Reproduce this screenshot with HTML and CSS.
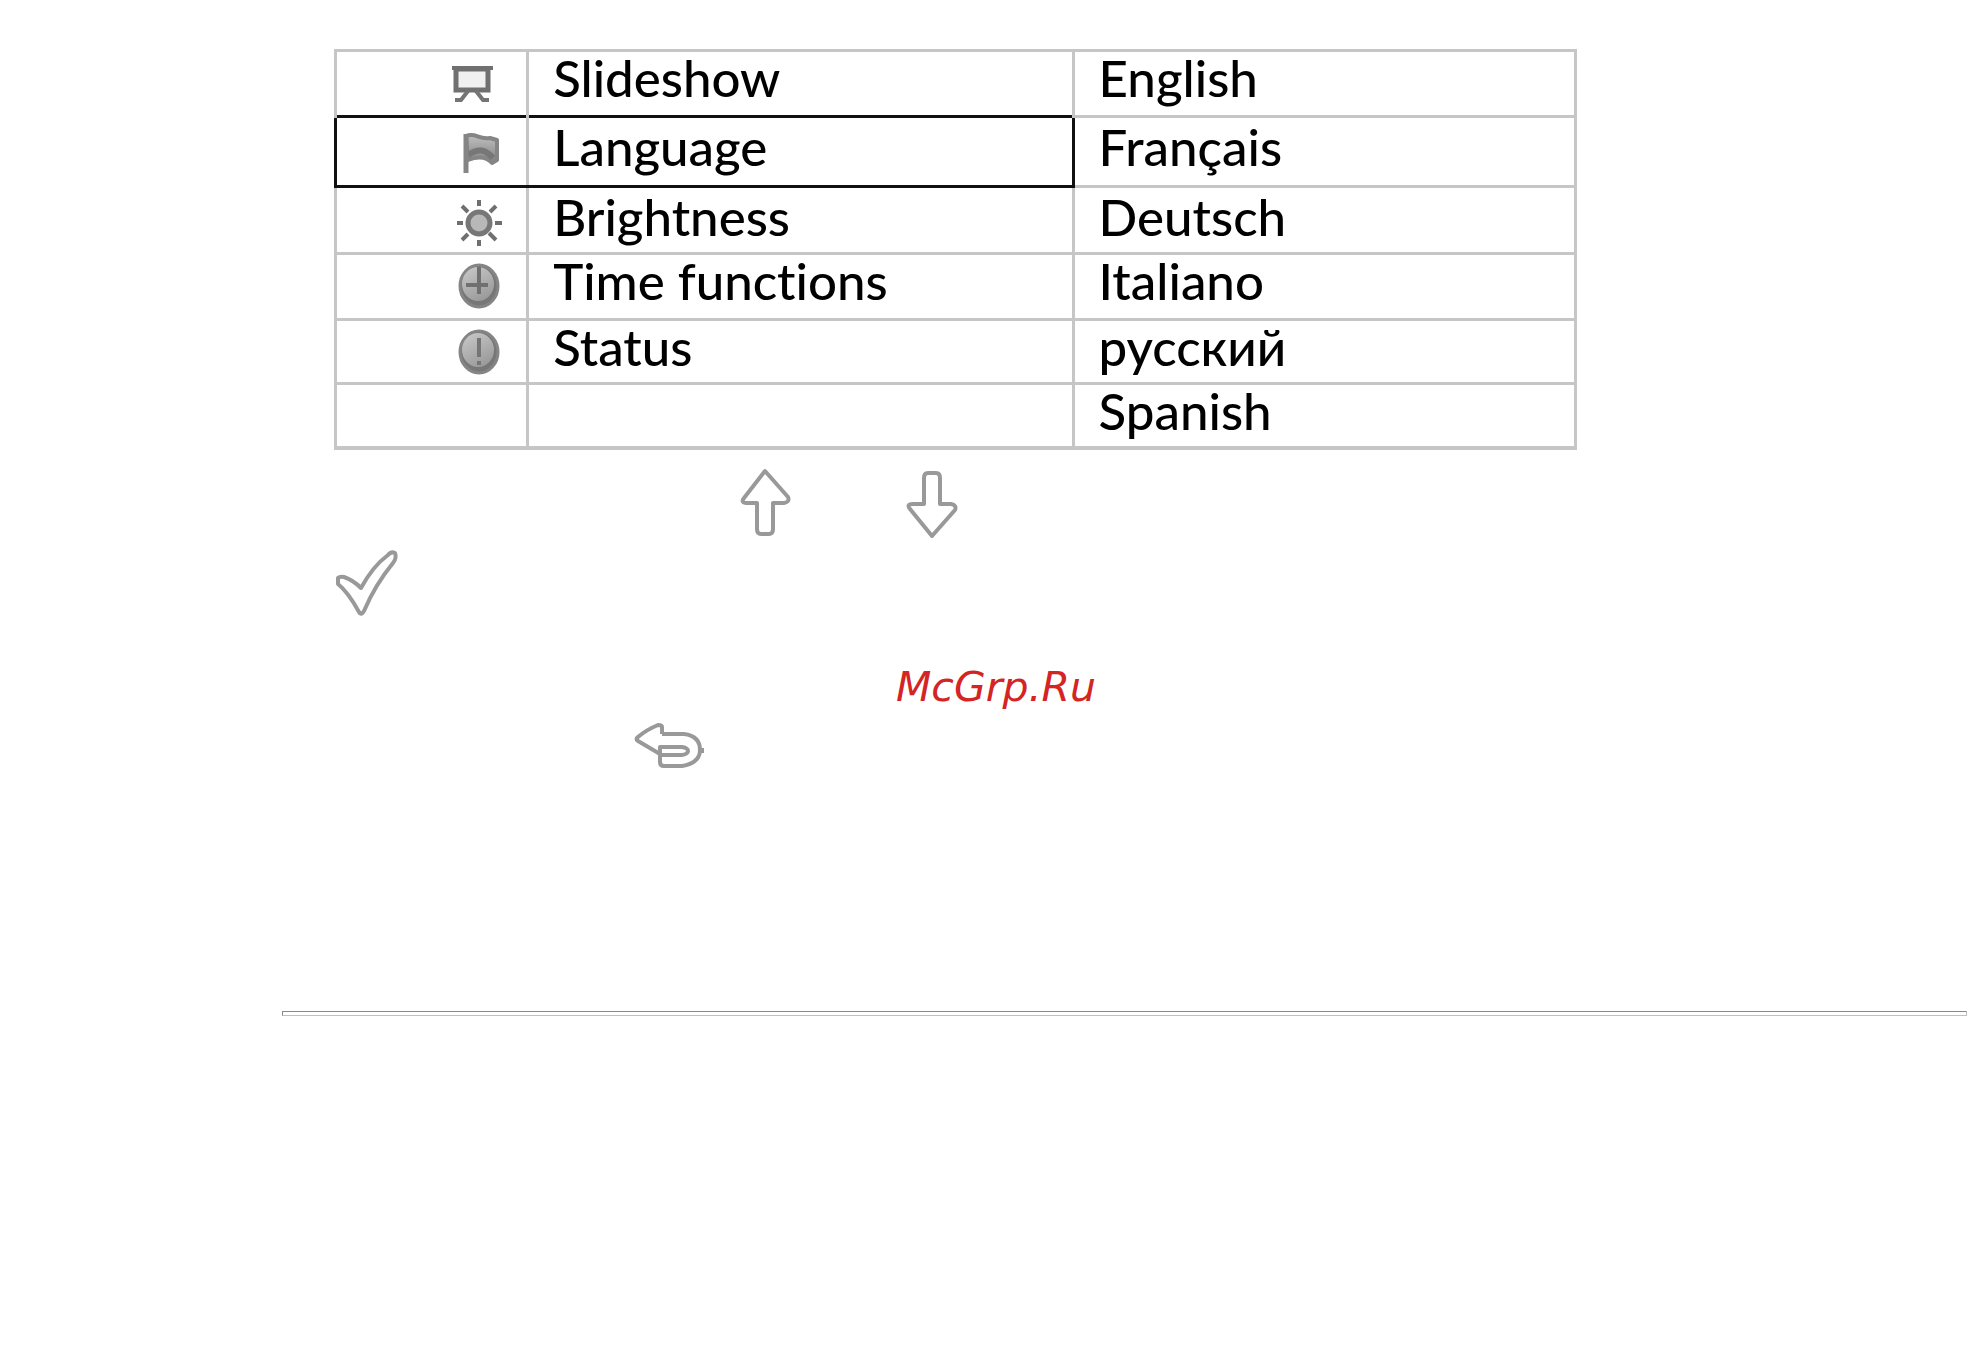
FILE: index.html
```html
<!DOCTYPE html>
<html lang="en">
<head>
  <meta charset="UTF-8" />
  <meta name="viewport" content="width=device-width, initial-scale=1.0"/>
  <title>Menu settings</title>
  <link rel="stylesheet" href="styles.css">
</head>
<body>
  <main class="manual-page">
    <table class="menu-table">
      <colgroup>
        <col class="col-icon">
        <col class="col-name">
        <col class="col-option">
      </colgroup>
      <tbody>
        <tr class="row-first">
          <td class="icon-cell">
            <svg class="menu-icon" viewBox="0 0 48 48" aria-hidden="true">
              <rect x="0" y="9" width="32" height="21" fill="#f0f0f0" stroke="#707070" stroke-width="5"/>
              <path d="M-4 8H37" stroke="#707070" stroke-width="4"/>
              <path d="M12 31L5 40H-1M20 31L27 40H33" fill="none" stroke="#757575" stroke-width="4"/>
            </svg>
          </td>
          <td>Slideshow</td>
          <td>English</td>
        </tr>
        <tr class="row-language selected">
          <td class="icon-cell">
            <svg class="menu-icon" viewBox="0 0 48 48" aria-hidden="true">
              <defs>
                <linearGradient id="flag-fill" x1="0" y1="0" x2="0" y2="1">
                  <stop offset="0" stop-color="#c0c0c0"/>
                  <stop offset="1" stop-color="#808080"/>
                </linearGradient>
              </defs>
              <path d="M10 7C20 3 22 11 34 9L41 11V31L36 34C30 27 20 28 12 31Z" fill="url(#flag-fill)" stroke="#858585" stroke-width="4" stroke-linejoin="round"/>
              <path d="M12 26C22 19 29 20 37 29" fill="none" stroke="#777" stroke-width="6"/>
              <path d="M10 5V44" stroke="#858585" stroke-width="5"/>
            </svg>
          </td>
          <td>Language</td>
          <td>Français</td>
        </tr>
        <tr class="row-brightness">
          <td class="icon-cell">
            <svg class="menu-icon" viewBox="0 0 48 48" aria-hidden="true">
              <path d="M23 1V7M23 41V47M1 24H7M39 24H46M6 7L12 13M40 7L34 13M6 41L12 35M33 34L40 41" stroke="#6f6f6f" stroke-width="4"/>
              <circle cx="23" cy="24" r="11" fill="#b8b8b8" stroke="#777" stroke-width="5"/>
            </svg>
          </td>
          <td>Brightness</td>
          <td>Deutsch</td>
        </tr>
        <tr class="row-time">
          <td class="icon-cell">
            <svg class="menu-icon" viewBox="0 0 48 48" aria-hidden="true">
              <defs>
                <linearGradient id="disc-fill" x1="0" y1="0" x2="0.5" y2="1">
                  <stop offset="0" stop-color="#cacaca"/>
                  <stop offset="1" stop-color="#9c9c9c"/>
                </linearGradient>
              </defs>
              <ellipse cx="23" cy="23" rx="19" ry="21" fill="#777" stroke="#858585" stroke-width="3"/>
              <ellipse cx="22" cy="21" rx="16" ry="17" fill="url(#disc-fill)"/>
              <path d="M23 4V31M10 22H32" stroke="#707070" stroke-width="4"/>
            </svg>
          </td>
          <td>Time functions</td>
          <td>Italiano</td>
        </tr>
        <tr class="row-status">
          <td class="icon-cell">
            <svg class="menu-icon" viewBox="0 0 48 48" aria-hidden="true">
              <ellipse cx="23" cy="23" rx="19" ry="21" fill="#777" stroke="#858585" stroke-width="3"/>
              <ellipse cx="22" cy="21" rx="16" ry="17" fill="url(#disc-fill)"/>
              <path d="M23 9V28M23 32V36" stroke="#757575" stroke-width="4"/>
            </svg>
          </td>
          <td>Status</td>
          <td lang="ru">русский</td>
        </tr>
        <tr class="row-last">
          <td></td>
          <td></td>
          <td>Spanish</td>
        </tr>
      </tbody>
    </table>

    <div class="key-row arrow-keys">
      <svg class="arrow-key" viewBox="0 0 54 72" role="img" aria-label="Up">
        <path d="M27 4L50 30Q52 35 46 36H35V62Q35 67 31 67H23Q19 67 19 62V36H10Q2 36 6 31Z"/>
      </svg>
      <svg class="arrow-key" viewBox="0 0 54 72" role="img" aria-label="Down">
        <path d="M26 69L49 43Q51 38 45 37H34V11Q34 6 30 6H22Q18 6 18 11V37H7Q0 37 4 42Z"/>
      </svg>
    </div>

    <div class="key-row">
      <svg class="ok-key" viewBox="0 0 66 72" role="img" aria-label="OK">
        <path d="M4 31L4 37Q14 45 25 65Q27 69 30 64Q41 38 59 16Q63 11 61 6Q57 4 54 8Q39 19 27 41Q19 33 10 30Q6 29 4 31Z"/>
      </svg>
    </div>

    <p class="brand">McGrp.Ru</p>

    <div class="key-row back-row">
      <svg class="back-key" viewBox="0 0 72 52" role="img" aria-label="Back">
        <path d="M28 15V8Q28 6 24 6Q12 11 4 18Q1 20 4 22L26 35V43Q26 47 30 47H48Q66 44 66 31Q66 17 50 15H28"/>
        <path d="M26 36V28H48Q54 29 54 32Q54 35 48 36H26"/>
        <path d="M68 29V34"/>
      </svg>
    </div>
  </main>
  <hr class="page-rule">
</body>
</html>
```
FILE: styles.css
```css
body {
  margin: 0;
  background-color: #fff;
  color: #000;
  font-family: Lato, "Open Sans", sans-serif;
}

.manual-page {
  padding: 49px 13px 0 334px;
}

.menu-table {
  width: 76.1%;
  table-layout: fixed;
  border-collapse: collapse;
  border: 3px solid #c6c6c6;
  border-bottom-width: 4px;
}

.col-icon {
  width: 15.5%;
}

.col-name {
  width: 44%;
}

.menu-table td {
  box-sizing: border-box;
  padding: 0 24px;
  border-top: 3px solid #c6c6c6;
  border-left: 3px solid #c6c6c6;
  font-size: 51px;
  font-weight: 500;
  font-variant-ligatures: none;
  line-height: 52px;
  vertical-align: top;
}

.menu-table .icon-cell {
  padding: 8px 22px 0 0;
  line-height: 0;
  text-align: right;
}

.menu-icon {
  width: 48px;
  height: 48px;
  overflow: visible;
}

.row-first,
.row-time {
  height: 66px;
}

.row-language {
  height: 70px;
}

.row-brightness {
  height: 67px;
}

.row-status,
.row-last {
  height: 64px;
}

.row-language td,
.row-brightness td {
  padding-top: 3px;
}

.menu-table .row-language .icon-cell,
.menu-table .row-brightness .icon-cell {
  padding-top: 11px;
}

/* current menu item, boxed over the first two columns */
.menu-table .selected td:nth-child(-n+2) {
  border-top-color: #111;
  border-bottom: 3px solid #111;
}

.menu-table .selected td:first-child {
  border-left-color: #111;
}

.menu-table .selected td:nth-child(2) {
  border-right: 3px solid #111;
}

.key-row {
  display: flex;
}

.key-row svg {
  fill: #fff;
  stroke: #999;
  stroke-width: 4px;
  stroke-linejoin: round;
}

.arrow-keys {
  gap: 114px;
  padding: 17px 0 8px 404px;
}

.arrow-key {
  width: 54px;
  height: 72px;
}

.ok-key {
  width: 66px;
  height: 72px;
}

.brand {
  margin: 44px 0 8px;
  padding-left: 562px;
  color: #d42424;
  font-family: "DejaVu Sans", sans-serif;
  font-size: 41px;
  font-style: italic;
  line-height: 48px;
}

.back-row {
  padding-left: 300px;
}

.back-key {
  width: 72px;
  height: 52px;
}

.page-rule {
  height: 3px;
  margin: 240px 13px 0 282px;
  border: 1px solid #c0c0c0;
  border-top-color: #888;
  border-left-color: #888;
}
```
